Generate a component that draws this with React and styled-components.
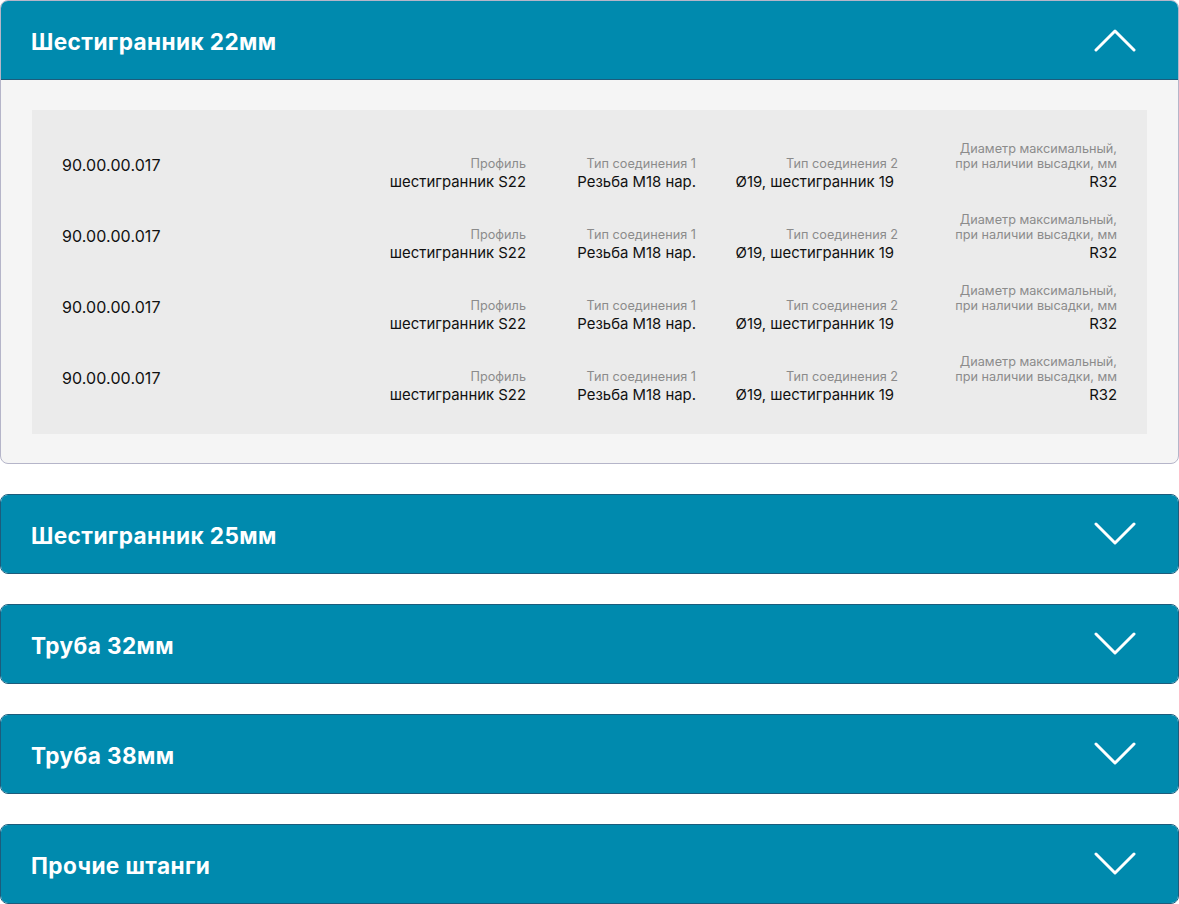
import React, { useState } from "react";
import styled, { createGlobalStyle } from "styled-components";

const Global = createGlobalStyle`
  html, body { margin: 0; padding: 0; background: #ffffff; }
  body { font-family: "Inter", "Noto Sans", sans-serif; }
  * { box-sizing: border-box; }
`;

const List = styled.div`
  display: flex;
  flex-direction: column;
  gap: 30px;
  width: 1179px;
`;

const Item = styled.div`
  border: 1px solid ${(p) => (p.$open ? "#b5b5c9" : "#1d5c7c")};
  border-radius: 8px;
  overflow: hidden;
  background: #f5f5f5;
`;

const Header = styled.button`
  display: flex;
  align-items: center;
  justify-content: space-between;
  width: 100%;
  height: ${(p) => (p.$open ? "80px" : "78px")};
  margin: ${(p) => (p.$open ? "-1px 0 0" : "0")};
  padding: 0 42px 0 30px;
  background: #008aae;
  border: none;
  border-top: ${(p) => (p.$open ? "1px solid #1d5c7c" : "none")};
  border-bottom: ${(p) => (p.$open ? "1px solid #1d5c7c" : "none")};
  color: #ffffff;
  cursor: pointer;
  font-family: "Inter", "Noto Sans", sans-serif;
`;

const Title = styled.span`
  font-size: 22.6px;
  font-weight: 700;
  letter-spacing: 0.4px;
  padding-top: 2px;
`;

const Chevron = ({ up }) => (
  <svg width="42" height="26" viewBox="0 0 42 26" fill="none">
    <path
      d={up ? "M2 23 L21 4 L40 23" : "M2 3 L21 22 L40 3"}
      stroke="#ffffff"
      strokeWidth="3"
      strokeLinecap="round"
      strokeLinejoin="round"
    />
  </svg>
);

const Body = styled.div`
  padding: 30px 31px 29px 31px;
`;

const Table = styled.div`
  background: #ebebeb;
  padding: 20px 30px;
  display: flex;
  flex-direction: column;
`;

const Row = styled.div`
  display: grid;
  grid-template-columns: 1fr 160px 170px 202px 219px;
  align-items: end;
  height: 71px;
  padding-bottom: 9px;
`;

const Code = styled.div`
  align-self: center;
  padding-top: 8px;
  font-size: 16px;
  color: #111111;
  letter-spacing: 0.1px;
`;

const Cell = styled.div`
  text-align: right;
  display: flex;
  flex-direction: column;
  align-items: flex-end;
`;

const Label = styled.div`
  font-size: 12.7px;
  line-height: 15px;
  color: #8b8b8b;
`;

const Value = styled.div`
  font-size: 14.9px;
  line-height: 19px;
  color: #111111;
  margin-top: 2px;
  padding-right: ${(p) => p.$inset || 0}px;
`;

const rows = Array.from({ length: 4 }, () => ({
  code: "90.00.00.017",
  profile: "шестигранник S22",
  c1: "Резьба M18 нар.",
  c2: "Ø19, шестигранник 19",
  dia: "R32",
}));

const sections = [
  "Шестигранник 22мм",
  "Шестигранник 25мм",
  "Труба 32мм",
  "Труба 38мм",
  "Прочие штанги",
];

export default function App() {
  const [open, setOpen] = useState(0);
  return (
    <>
      <Global />
      <List>
        {sections.map((s, i) => {
          const isOpen = open === i;
          return (
            <Item key={s} $open={isOpen}>
              <Header $open={isOpen} onClick={() => setOpen(isOpen ? -1 : i)}>
                <Title>{s}</Title>
                <Chevron up={isOpen} />
              </Header>
              {isOpen && (
                <Body>
                  <Table>
                    {rows.map((r, k) => (
                      <Row key={k}>
                        <Code>{r.code}</Code>
                        <Cell>
                          <Label>Профиль</Label>
                          <Value>{r.profile}</Value>
                        </Cell>
                        <Cell>
                          <Label>Тип соединения 1</Label>
                          <Value>{r.c1}</Value>
                        </Cell>
                        <Cell>
                          <Label>Тип соединения 2</Label>
                          <Value $inset={4}>{r.c2}</Value>
                        </Cell>
                        <Cell>
                          <Label>
                            Диаметр максимальный,
                            <br />
                            при наличии высадки, мм
                          </Label>
                          <Value>{r.dia}</Value>
                        </Cell>
                      </Row>
                    ))}
                  </Table>
                </Body>
              )}
            </Item>
          );
        })}
      </List>
    </>
  );
}
